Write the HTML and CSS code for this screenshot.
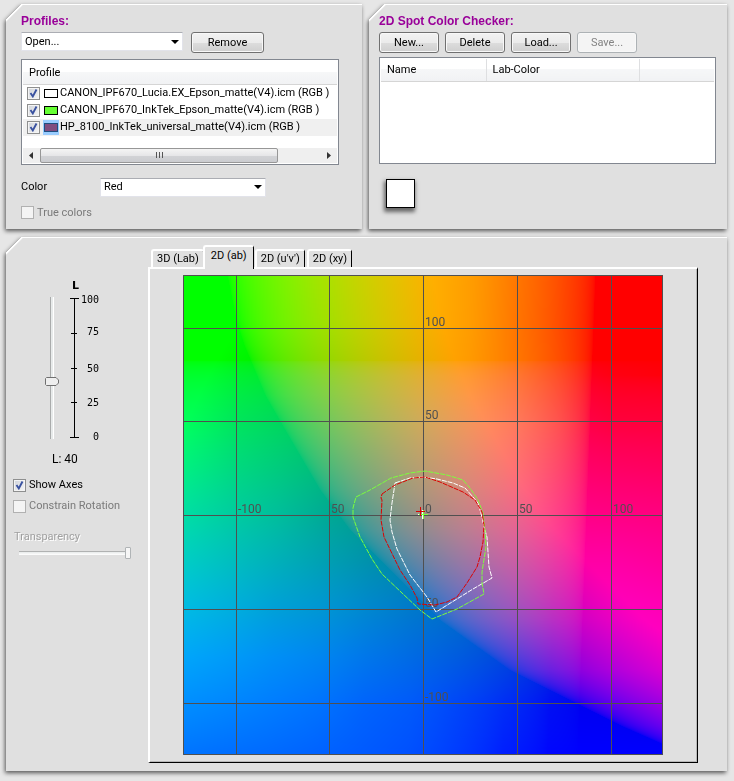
FILE: index.html
```html
<!DOCTYPE html>
<html lang="en">
<head>
    <meta charset="UTF-8">
    <meta name="viewport" content="width=device-width, initial-scale=1.0">
    <title>Profile Gamut Viewer</title>
    <link rel="stylesheet" href="styles.css">
</head>
<body>
    <div class="top-row">
        <!-- Profiles -->
        <section class="panel profiles">
            <h2>Profiles:</h2>
            <div class="open-row">
                <select class="open-select" aria-label="Open profile">
                    <option>Open...</option>
                </select>
                <button type="button">Remove</button>
            </div>
            <div class="list-box profile-list">
                <table>
                    <thead>
                        <tr><th>Profile</th></tr>
                    </thead>
                    <tbody>
                        <tr><td><label><input type="checkbox" checked><span class="chip"><i class="chip-white"></i></span>CANON_IPF670_Lucia.EX_Epson_matte(V4).icm (RGB )</label></td></tr>
                        <tr><td><label><input type="checkbox" checked><span class="chip"><i class="chip-green"></i></span>CANON_IPF670_InkTek_Epson_matte(V4).icm (RGB )</label></td></tr>
                        <tr class="selected"><td><label><input type="checkbox" checked><span class="chip"><i class="chip-purple"></i></span>HP_8100_InkTek_universal_matte(V4).icm (RGB )</label></td></tr>
                    </tbody>
                </table>
                <div class="scrollbar">
                    <svg width="17" height="15" viewBox="0 0 17 15"><path d="M10 4v7L6 7.500z" fill="#333"/></svg>
                    <div class="scroll-track">
                        <div class="scroll-thumb"><i></i><i></i><i></i></div>
                    </div>
                    <svg width="17" height="15" viewBox="0 0 17 15"><path d="M7 4v7l4-3.500z" fill="#333"/></svg>
                </div>
            </div>
            <div class="color-row">
                <label for="color">Color</label>
                <select id="color">
                    <option>Red</option>
                </select>
            </div>
            <label class="check disabled"><input type="checkbox" disabled>True colors</label>
        </section>

        <!-- Spot colors -->
        <section class="panel spots">
            <h2>2D Spot Color Checker:</h2>
            <div class="button-row">
                <button type="button">New...</button>
                <button type="button">Delete</button>
                <button type="button">Load...</button>
                <button type="button" disabled>Save...</button>
            </div>
            <div class="list-box spot-list">
                <table>
                    <thead>
                        <tr><th class="col-name">Name</th><th class="col-lab">Lab-Color</th><th></th></tr>
                    </thead>
                </table>
            </div>
            <div class="swatch"></div>
        </section>
    </div>

    <!-- Gamut view -->
    <section class="panel viewer">
        <div class="side">
            <div class="lightness">
                <input type="range" class="l-slider" min="0" max="100" value="40" aria-label="L">
                <svg class="scale" width="40" height="166" viewBox="0 0 40 166">
                    <text class="scale-title" x="4" y="12">L</text>
                    <path d="M6.500 21v139M2 21.500h9M3 56.500h6M3 91.500h6M3 125.500h6M2 160.500h9" stroke="#000" fill="none"/>
                    <text x="31" y="26">100</text>
                    <text x="31" y="58">75</text>
                    <text x="31" y="95">50</text>
                    <text x="31" y="129">25</text>
                    <text x="31" y="163">0</text>
                </svg>
            </div>
            <div class="l-value">L: 40</div>
            <label class="check"><input type="checkbox" checked>Show Axes</label>
            <label class="check disabled"><input type="checkbox" disabled>Constrain Rotation</label>
            <label class="transparency-label" for="transparency">Transparency</label>
            <input type="range" id="transparency" min="0" max="100" value="100" disabled>
        </div>

        <div class="view">
            <div class="tabs" role="tablist">
                <button type="button" role="tab" aria-selected="false">3D (Lab)</button>
                <button type="button" role="tab" aria-selected="true">2D (ab)</button>
                <button type="button" role="tab" aria-selected="false">2D (u'v')</button>
                <button type="button" role="tab" aria-selected="false">2D (xy)</button>
            </div>
            <div class="pane" role="tabpanel">
                <div class="plot">
                    <canvas id="abPlane" width="480" height="480"></canvas>
                    <svg viewBox="0 0 480 480">
                        <g class="axes">
                            <path d="M.5.5h479v479H.5zM53.500 0v480M146.500 0v480M240.500 0v480M334.500 0v480M428.500 0v480M0 53.500h480M0 146.500h480M0 240.500h480M0 334.500h480M0 428.500h480"/>
                            <text x="242" y="51">100</text>
                            <text x="242" y="144">50</text>
                            <text x="242" y="238">0</text>
                            <text x="242" y="332">50</text>
                            <text x="242" y="426">-100</text>
                            <text x="55" y="238">-100</text>
                            <text x="148" y="238">50</text>
                            <text x="336" y="238">50</text>
                            <text x="430" y="238">100</text>
                        </g>
                        <g class="gamuts">
                            <polygon class="g-white" points="212,208 227,203 240,202 254,204 270,208 282,213 290,222 295,228 299,242 301,252 304,262 306,292 309,303 290,314 253,337 244,322 227,300 214,274 209,257 207,245 209,228 211,215"/>
                            <polygon class="g-green" points="173,222 187,215 208,203 227,198 242,196 264,200 280,205 287,213 295,225 300,238 302,255 303,272 299,297 299,308 301,319 274,334 249,344 237,335 219,318 199,299 189,284 177,262 170,242 170,233"/>
                            <polygon class="g-red" points="199,219 212,210 230,203 242,202 257,207 280,217 292,225 299,237 301,250 300,267 297,282 294,292 284,308 274,322 264,327 252,330 235,329 234,323 227,310 217,295 201,262 198,245 199,225 198,223"/>
                            <path class="g-white" d="M239.500 235v9M235 239.500h9"/>
                            <path class="g-green" d="M240.500 235v9M236 239.500h9"/>
                            <path class="g-red" d="M237.500 232v9M233 236.500h9"/>
                        </g>
                    </svg>
                </div>
            </div>
        </div>
    </section>
    <script src="script.js"></script>
</body>
</html>
```
FILE: styles.css
```css
* { box-sizing: border-box; }

body {
    margin: 0;
    padding: 4px 7px 9px 6px;
    background-color: #e6e6e6;
    color: #000;
    font-family: Roboto, Arial, sans-serif;
    font-size: 11px;
    line-height: 14px;
}

/* Panels with a cut corner */
.panel {
    background:
        linear-gradient(#fff, #fff) 16px 0 / 100% 1px no-repeat,
        linear-gradient(135deg, transparent 11px, #fff 11px, #fff 12px, #e0e0e0 13px);
    filter: drop-shadow(-1px 2px 2px #555);
}
.top-row { display: grid; grid-template-columns: 356fr 358fr; gap: 7px; margin-bottom: 8px; }
.top-row .panel { min-width: 0; height: 225px; }

h2 { margin: 0; color: #990099; font-family: "Liberation Sans", Arial, sans-serif; font-size: 12px; line-height: 16px; }

/* Controls */
button, select, input { font: inherit; color: inherit; margin: 0; }
button {
    height: 21px;
    padding: 0;
    border: 1px solid #707070;
    border-radius: 3px;
    background: linear-gradient(#f2f2f2, #ebebeb 50%, #dddddd 50%, #cfcfcf);
    box-shadow: inset 0 0 0 1px #f8f8f8;
}
button:disabled { border-color: #adb2b5; background: #f4f4f4; color: #838383; }
select {
    height: 19px;
    padding: 0 3px;
    appearance: none;
    border: 1px solid #e2e3ea;
    border-top-color: #abadb3;
    background: #fff url("data:image/svg+xml,%3Csvg xmlns='http://www.w3.org/2000/svg' width='8' height='4'%3E%3Cpath d='M0 0h8L4 4z'/%3E%3C/svg%3E") right 3px center no-repeat;
}
input[type="checkbox"] {
    width: 13px;
    height: 13px;
    flex: none;
    appearance: none;
    border: 1px solid #8e8f8f;
    background: linear-gradient(135deg, #cfd3da, #f6f6f6);
    box-shadow: inset 0 0 0 1px #f4f4f4;
}
input[type="checkbox"]:checked {
    background-image: url("data:image/svg+xml,%3Csvg xmlns='http://www.w3.org/2000/svg' width='11' height='11'%3E%3Cpath d='M2.500 5l2.300 3.500L8.500 1.500' fill='none' stroke='%233a52a0' stroke-width='1.900'/%3E%3C/svg%3E"), linear-gradient(135deg, #cfd3da, #f6f6f6);
}
input[type="checkbox"]:disabled { border-color: #b1b1b1; background: #f4f4f4; }
.check { display: flex; align-items: center; gap: 3px; white-space: nowrap; }
.check.disabled { color: #7a7a7a; }

/* Profiles panel */
.profiles { padding: 9px 23px 0 15px; }
.open-row { display: flex; gap: 8px; margin: 3px 0 6px; }
.open-select { width: 162px; }
.open-row button { width: 73px; }

.list-box { border: 1px solid #828790; background-color: #fff; }
table { width: 100%; border-collapse: collapse; table-layout: fixed; }
th {
    height: 22px;
    padding: 0 6px;
    border-bottom: 1px solid #d5d5d5;
    background: linear-gradient(#fff 45%, #f6f7f8 45%, #f1f2f4);
    font-weight: normal;
    text-align: left;
}
td { padding: 0; }
.profile-list { padding: 2px 1px 1px; }
.profile-list label { display: flex; align-items: center; height: 17px; padding-left: 4px; white-space: nowrap; }
.profile-list input { margin-right: 3px; }
.selected { background-color: #f0f0f0; }
.chip { display: flex; margin-right: 1px; padding: 3px 1px; }
.selected .chip { background-color: #99ccff; }
.chip i { width: 14px; height: 9px; border: 1px solid #000; }
.chip-white { background-color: #fff; }
.chip-green { background-color: #66ff33; }
.chip .chip-purple { background-color: #804d80; border-color: #1f4f80; }

.scrollbar { display: flex; margin-top: 12px; background-color: #efefef; }
.scroll-track { flex: 1; }
.scroll-thumb {
    display: flex;
    justify-content: center;
    align-items: center;
    gap: 2px;
    width: 85%;
    height: 15px;
    border: 1px solid #979797;
    border-radius: 2px;
    background: linear-gradient(#f4f4f4, #e6e6e8 50%, #d2d3d6 50%, #cbccd0);
}
.scroll-thumb i { width: 1px; height: 6px; background-color: #555; }

.color-row { display: flex; align-items: center; margin: 13px 0 9px; }
.color-row label { width: 79px; }
.color-row select { width: 166px; }

/* Spot panel */
.spots { padding: 9px 11px 0 10px; }
.button-row { display: flex; gap: 6px; margin: 3px 0 4px; }
.button-row button { width: 60px; }
.spot-list { height: 107px; padding: 1px; }
.spot-list th { border-right: 1px solid #dedfe1; }
.spot-list th:last-child { border-right: 0; }
.col-name { width: 105px; }
.col-lab { width: 153px; }
.swatch {
    width: 29px;
    height: 29px;
    margin: 15px 0 0 7px;
    border: 1px solid #000;
    background-color: #fff;
    box-shadow: -1px 3px 4px 1px #666;
}

/* Viewer */
.viewer { display: flex; padding: 8px 29px 8px 0; }
.side { width: 142px; flex: none; padding: 32px 14px 0 7px; }
.lightness { display: flex; margin-left: 32px; gap: 9px; }
.l-slider {
    width: 14px;
    height: 142px;
    margin-top: 20px;
    appearance: none;
    writing-mode: vertical-lr;
    direction: rtl;
    background: linear-gradient(90deg, #a9abab 1px, #e7eaea 1px, #e7eaea 3px, #fff 3px) center / 4px 100% no-repeat;
}
.l-slider::-webkit-slider-thumb {
    width: 14px;
    height: 9px;
    appearance: none;
    background: url("data:image/svg+xml,%3Csvg xmlns='http://www.w3.org/2000/svg' width='14' height='9'%3E%3Cpath d='M1.500.5h9.500l2.500 2.500v3l-2.500 2.500H1.500l-1-1v-6z' fill='%23eeeeee' stroke='%23707070'/%3E%3C/svg%3E") no-repeat;
}
.scale { font-family: "DejaVu Sans Mono", monospace; font-size: 10px; text-anchor: end; }
.scale .scale-title { font-family: "DejaVu Sans", sans-serif; font-size: 11px; font-weight: bold; text-anchor: start; }
.l-value { margin: 9px 0 12px 39px; font-size: 12px; }
.side .check { height: 14px; margin-bottom: 7px; }
.transparency-label { display: block; margin: 17px 0 2px 1px; color: #a0a0a0; text-shadow: 1px 1px #fff; }
#transparency {
    display: block;
    width: 112px;
    height: 14px;
    margin-left: 6px;
    appearance: none;
    background: linear-gradient(#b0b2b2 1px, #e7eaea 1px, #fff) center / 100% 4px no-repeat;
}
#transparency::-webkit-slider-thumb {
    width: 6px;
    height: 12px;
    appearance: none;
    border: 1px solid #b0b4b6;
    border-radius: 1px;
    background-color: #f6f6f6;
}

.view { flex: 1; min-width: 0; }
.tabs { display: flex; align-items: flex-end; height: 22px; padding-left: 3px; }
.tabs button {
    height: 18px;
    padding: 0 4px;
    border: 2px solid #fff;
    border-right-color: #000;
    border-right-width: 1px;
    border-bottom: 0;
    border-radius: 3px 3px 0 0;
    background: #e0e0e0;
    box-shadow: none;
    margin-right: 2px;
}
.tabs button[aria-selected="true"] {
    position: relative;
    z-index: 1;
    height: 24px;
    margin: 0 1px -2px -3px;
    padding: 0 6px 4px;
}
.pane {
    padding: 6px 34px 7px 33px;
    border: solid;
    border-width: 2px 1px 1px 2px;
    border-color: #fff #000 #000 #fff;
    box-shadow: inset -1px -1px #b8b8b8;
}
.plot { display: grid; }
.plot canvas, .plot svg { grid-area: 1 / 1; width: 100%; display: block; }
.axes path { fill: none; stroke: #505050; }
.axes text { fill: #505050; font-size: 12px; }
.gamuts polygon { fill: none; stroke-dasharray: 5 1; }
.gamuts path { fill: none; stroke-width: 1; }
.gamuts .g-white { stroke: #fff; }
.gamuts .g-green { stroke: #7cff3c; }
.gamuts .g-red { stroke: #dc0000; }
```
FILE: script.js
```javascript
// Paints the a/b plane behind the gamut outlines
const SIZE = 480;

// [x, y] where red drops out of range
const redEdge = [
    [44, 0], [53, 45], [61, 70], [82, 120], [102, 155], [137, 215],
    [167, 255], [207, 295], [257, 345], [327, 395], [377, 420], [437, 450], [480, 469]
];

// green level, one row per y, columns going left from the green edge
const greenX = [0, 30, 75, 122, 169, 216, 262, 309, 356, 412];
const greenY = [0, 53, 146, 240, 334, 428, 480];
const green = [
    [0, 70, 115, 155, 178, 202, 222, 242, 255, 275],
    [0, 70, 115, 155, 178, 202, 222, 242, 255, 275],
    [0, 80, 122, 150, 170, 185, 200, 215, 230, 260],
    [0, 65, 105, 130, 145, 155, 170, 190, 205, 225],
    [0, 50, 88, 108, 120, 135, 150, 160, 175, 190],
    [0, 15, 45, 70, 90, 100, 115, 125, 135, 145],
    [0, 5, 30, 60, 80, 90, 98, 105, 110, 117]
];

// blue level, one row per y
const blueX = [0, 100, 240, 334, 428, 480];
const blueY = [85, 100, 146, 193, 240, 287, 334, 381, 428, 480];
const blue = [
    [0, 0, 0, 0, 0, 0],
    [45, 48, 50, 48, 18, 10],
    [90, 92, 90, 90, 60, 58],
    [130, 125, 112, 115, 100, 95],
    [165, 155, 132, 140, 132, 128],
    [198, 185, 165, 165, 165, 155],
    [228, 215, 202, 190, 190, 182],
    [250, 245, 226, 218, 212, 202],
    [255, 255, 250, 245, 238, 225],
    [255, 255, 255, 255, 255, 255]
];

function locate(stops, v) {
    if (v <= stops[0]) return [0, 0];
    for (let i = 1; i < stops.length; i++) {
        if (v <= stops[i]) return [i - 1, (v - stops[i - 1]) / (stops[i] - stops[i - 1])];
    }
    return [stops.length - 2, 1];
}

// squares are mixed, so that a channel rises quickly from zero
function level(table, xs, ys, x, y) {
    const [i, u] = locate(xs, x);
    const [j, v] = locate(ys, y);
    const sq = (r, c) => table[r][c] * table[r][c];
    const top = sq(j, i) * (1 - u) + sq(j, i + 1) * u;
    const bottom = sq(j + 1, i) * (1 - u) + sq(j + 1, i + 1) * u;
    return Math.sqrt(top * (1 - v) + bottom * v);
}

function paintPlane(canvas) {
    const ctx = canvas.getContext('2d');
    const img = ctx.createImageData(SIZE, SIZE);
    const edgeY = redEdge.map(p => p[1]);
    for (let y = 0; y < SIZE; y++) {
        const [k, t] = locate(edgeY, y);
        const edge = redEdge[k][0] * (1 - t) + redEdge[k + 1][0] * t + (y > 469 ? (y - 469) * 2 : 0);
        const greenEdge = 412 - 18 * y / SIZE;
        for (let x = 0; x < SIZE; x++) {
            const d = x - edge;
            const p = (y * SIZE + x) * 4;
            img.data[p] = d > 0 ? 255 * Math.pow(d / 205, 0.55) : 0;
            img.data[p + 1] = x < greenEdge ? level(green, greenX, greenY, greenEdge - x, y) : 0;
            img.data[p + 2] = y > 85 ? level(blue, blueX, blueY, x, y) : 0;
            img.data[p + 3] = 255;
        }
    }
    ctx.putImageData(img, 0, 0);
}

paintPlane(document.getElementById('abPlane'));
```
